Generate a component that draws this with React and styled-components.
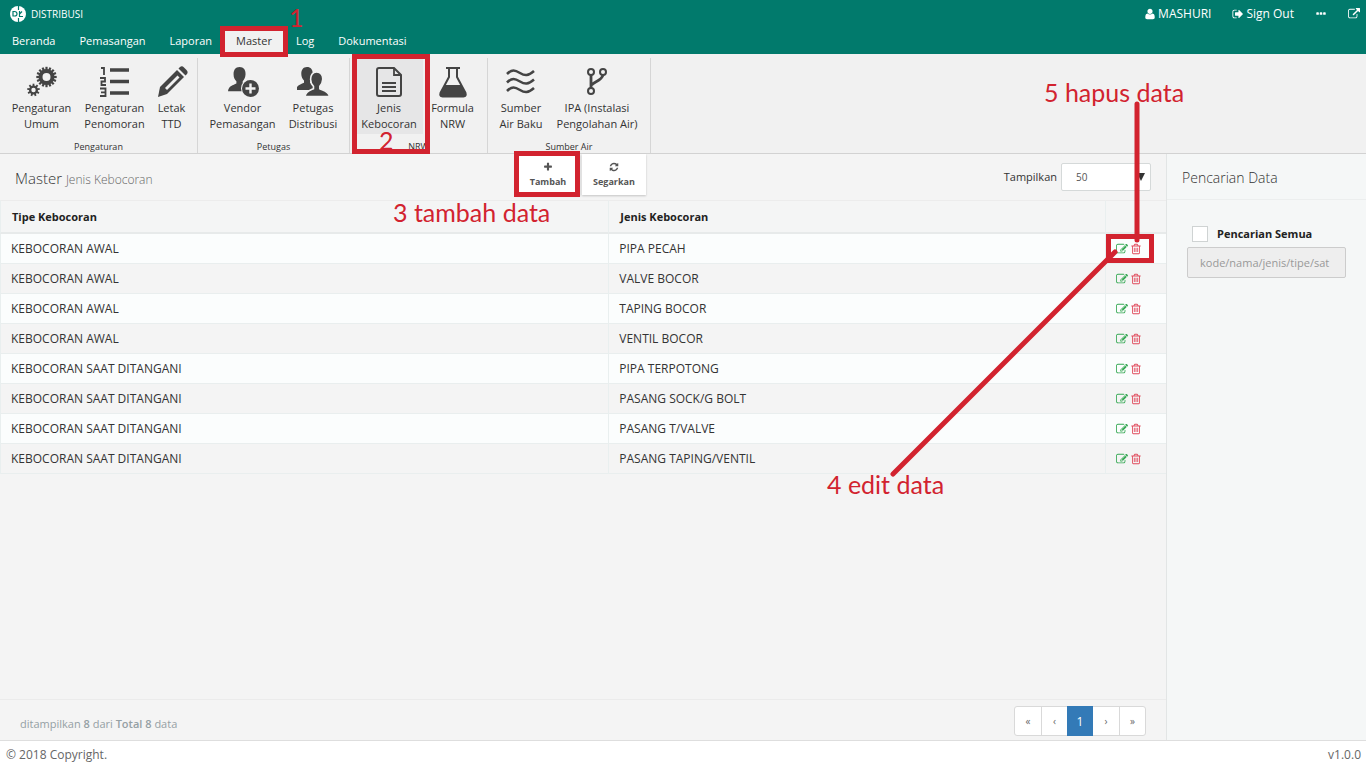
import React from "react";
import styled, { createGlobalStyle } from "styled-components";

const RED = "#d2232f";

const GlobalStyle = createGlobalStyle`
  *, *::before, *::after { box-sizing: border-box; }
  body {
    margin: 0;
    font-family: "Open Sans", "Noto Sans", sans-serif;
    font-size: 12px;
    line-height: 16px;
    color: #333;
    background: #f4f4f4;
  }
  button, input, select { font-family: inherit; margin: 0; }
`;

const Page = styled.div`
  min-height: 100vh;
  display: flex;
  flex-direction: column;
`;

/* ---------- header ---------- */
const Header = styled.header`
  background: #017a6c;
  color: #fff;
`;
const TitleBar = styled.div`
  height: 27px;
  display: flex;
  align-items: center;
  justify-content: space-between;
  padding: 0 6px 0 10px;
`;
const Brand = styled.div`
  display: flex;
  align-items: center;
  gap: 5px;
  font-size: 10px;
`;
const UserLinks = styled.nav`
  display: flex;
  align-items: center;
  gap: 21px;
`;
const UserLink = styled.a`
  display: flex;
  align-items: center;
  gap: 2px;
  color: #fff;
  text-decoration: none;
`;
const Tabs = styled.nav`
  display: flex;
  align-items: flex-end;
  height: 27px;
`;
const Tab = styled.a`
  position: relative;
  height: 24px;
  padding: 3px 12px;
  font-size: 11px;
  color: ${(p) => (p.$active ? "#333" : "#fff")};
  background: ${(p) => (p.$active ? "#f1f1f1" : "transparent")};
  text-decoration: none;
`;

/* ---------- ribbon ---------- */
const Ribbon = styled.div`
  display: flex;
  height: 100px;
  padding-top: 4px;
  background: #f1f1f1;
  border-bottom: 1px solid #d2d2d2;
`;
const Group = styled.section`
  display: flex;
  flex-direction: column;
  padding: 0 5px;
  border-right: 1px solid #d6d6d6;
`;
const GroupItems = styled.div`
  display: flex;
  flex: 1;
`;
const GroupName = styled.div`
  font-size: 9px;
  line-height: 12px;
  text-align: center;
`;
const RibbonButton = styled.button`
  position: relative;
  display: flex;
  flex-direction: column;
  align-items: center;
  width: ${(p) => p.$width}px;
  height: 76px;
  padding: 8px 0 0;
  border: 0;
  background: ${(p) => (p.$active ? "#e6e6e7" : "transparent")};
  font-size: 11px;
  line-height: 16px;
  color: #333;
  white-space: pre;
  svg { margin-bottom: 2px; flex: none; }
`;

/* ---------- body ---------- */
const Body = styled.div`
  flex: 1;
  display: flex;
`;
const Main = styled.main`
  flex: 1;
  min-width: 0;
  display: flex;
  flex-direction: column;
  background: #f4f4f4;
`;
const Toolbar = styled.div`
  height: 46px;
  display: grid;
  grid-template-columns: 1fr auto 1fr;
  align-items: start;
  padding: 0 15px;
`;
const Title = styled.h1`
  margin: 0;
  padding-top: 14px;
  font-size: 15px;
  line-height: 20px;
  font-weight: 300;
  small { font-size: 12px; color: #666; font-weight: 300; }
`;
const Actions = styled.div`
  display: flex;
  gap: 2px;
  padding-right: 4px;
`;
const ActionButton = styled.button`
  position: relative;
  width: 64px;
  height: 41px;
  display: flex;
  flex-direction: column;
  align-items: center;
  justify-content: center;
  gap: 4px;
  border: 0;
  padding: 0;
  background: #fff;
  box-shadow: 0 1px 2px rgba(0, 0, 0, 0.2);
  color: #555;
  font-size: 9px;
  line-height: 12px;
  font-weight: 700;
`;
const PageSize = styled.label`
  justify-self: end;
  display: flex;
  align-items: center;
  gap: 4px;
  padding-top: 9px;
  font-size: 11px;
`;
const SelectWrap = styled.span`
  position: relative;
  display: block;
  &::after {
    content: "";
    position: absolute;
    right: 6px;
    top: 10px;
    border: 4px solid transparent;
    border-top: 8px solid #333;
    border-bottom: 0;
  }
`;
const Select = styled.select`
  appearance: none;
  display: block;
  width: 90px;
  height: 28px;
  padding: 0 14px;
  border: 1px solid #d5d9d9;
  border-radius: 2px;
  background: #fff;
  font-size: 10px;
  color: #555;
`;

const Table = styled.table`
  width: 100%;
  border-collapse: separate;
  border-spacing: 0;
  table-layout: fixed;
  text-align: left;
`;
const HeadCell = styled.th`
  height: 34px;
  padding: 0 11px;
  font-size: 11px;
  font-weight: 700;
  color: #222;
  background: #f4f5f5;
  border-top: 1px solid #ececec;
  border-bottom: 2px solid #e7eaea;
  border-left: 1px solid #e9efef;
`;
const Row = styled.tr`
  background: ${(p) => (p.$odd ? "#f4f4f4" : "#fbfdfd")};
`;
const Cell = styled.td`
  position: relative;
  height: 30px;
  padding: 0 10px;
  border-bottom: 1px solid #e9eeee;
  border-left: 1px solid #e9efef;
`;
const RowActions = styled.div`
  display: flex;
  gap: 2px;
`;
const IconButton = styled.button`
  display: flex;
  border: 0;
  padding: 0;
  background: none;
  color: ${(p) => p.$color};
`;

const ListFooter = styled.div`
  margin-top: auto;
  height: 41px;
  display: flex;
  align-items: center;
  justify-content: space-between;
  padding: 2px 20px 0;
  border-top: 1px solid #ebebeb;
  font-size: 11px;
  color: #95a0a4;
  p { margin: 0; padding-top: 6px; }
  b { font-weight: 600; }
`;
const Pager = styled.nav`
  display: flex;
  height: 30px;
  border: 1px solid #d9d9d9;
  border-radius: 3px;
  background: #fff;
`;
const PageButton = styled.button`
  width: 26px;
  height: ${(p) => (p.$current ? 30 : 28)}px;
  margin: ${(p) => (p.$current ? "-1px 0" : "0")};
  padding: 0;
  border: 0;
  border-left: ${(p) => (p.$divided ? "1px solid #d9d9d9" : "0")};
  background: ${(p) => (p.$current ? "#337ab7" : "transparent")};
  color: ${(p) => (p.$current ? "#fff" : "#666")};
  font-size: ${(p) => (p.$current ? 12 : 10)}px;
`;

const Sidebar = styled.aside`
  width: 200px;
  border-left: 1px solid #e2e5e5;
  background: #f5f7f7;
`;
const SideTitle = styled.h2`
  margin: 0;
  height: 46px;
  padding: 14px 15px 0;
  border-bottom: 1px solid #eceeee;
  font-size: 14px;
  line-height: 20px;
  font-weight: 300;
`;
const SearchForm = styled.form`
  padding: 26px 20px;
`;
const CheckLabel = styled.label`
  display: flex;
  align-items: center;
  gap: 9px;
  padding-left: 5px;
  font-size: 11px;
  font-weight: 700;
  color: #222;
`;
const Checkbox = styled.input`
  appearance: none;
  width: 16px;
  height: 16px;
  border: 1px solid #cfd3d3;
  background: #fff;
`;
const SearchInput = styled.input`
  display: block;
  width: 100%;
  height: 31px;
  margin-top: 5px;
  padding: 0 12px;
  border: 1px solid #ccc;
  border-radius: 2px;
  background: #eee;
  font-size: 11px;
  &::placeholder { color: #999; opacity: 1; }
`;

const PageFooter = styled.footer`
  height: 28px;
  display: flex;
  align-items: center;
  justify-content: space-between;
  padding: 0 5px 0 6px;
  border-top: 1px solid #dedede;
  background: #fff;
  color: #666;
`;

/* ---------- tutorial call-outs lying over the page ---------- */
const Frame = styled.span`
  position: absolute;
  z-index: 5;
  left: ${(p) => p.$x}px;
  top: ${(p) => p.$y}px;
  width: ${(p) => p.$w}px;
  height: ${(p) => p.$h}px;
  border: 5px solid ${RED};
  pointer-events: none;
`;
const Note = styled.span`
  position: absolute;
  z-index: 6;
  left: ${(p) => p.$x}px;
  top: ${(p) => p.$y}px;
  font-family: Lato, sans-serif;
  font-size: 25px;
  line-height: 28px;
  font-weight: 400;
  color: ${RED};
  white-space: nowrap;
  pointer-events: none;
`;
const Pointer = styled.svg`
  position: absolute;
  z-index: 5;
  left: 0;
  top: 0;
  overflow: visible;
  pointer-events: none;
`;

/* ---------- icons ---------- */
const GLYPHS = {
  user: "M1600 1405q0 120-73 189.5t-194 69.5h-874q-121 0-194-69.5t-73-189.5q0-53 3.5-103.5t14-109 26.5-108.5 43-97.5 62-81 85.5-53.5 111.5-20q9 0 42 21.5t74.5 48 108 48 133.5 21.5 133.5-21.5 108-48 74.5-48 42-21.5q61 0 111.5 20t85.5 53.5 62 81 43 97.5 26.5 108.5 14 109 3.5 103.5zm-320-893q0 159-112.5 271.5t-271.5 112.5-271.5-112.5-112.5-271.5 112.5-271.5 271.5-112.5 271.5 112.5 112.5 271.5z",
  signOut: "M704 1440q0 4 1 20t.5 26.5-3 23.5-10 19.5-20.5 6.5h-320q-119 0-203.5-84.5t-84.5-203.5v-704q0-119 84.5-203.5t203.5-84.5h320q13 0 22.5 9.5t9.5 22.5q0 4 1 20t.5 26.5-3 23.5-10 19.5-20.5 6.5h-320q-66 0-113 47t-47 113v704q0 66 47 113t113 47h312l11.5 1 11.5 3 8 5.5 7 9 2 13.5zm928-544q0 26-19 45l-544 544q-19 19-45 19t-45-19-19-45v-288h-448q-26 0-45-19t-19-45v-384q0-26 19-45t45-19h448v-288q0-26 19-45t45-19 45 19l544 544q19 19 19 45z",
  dots: "M576 736v192q0 40-28 68t-68 28h-192q-40 0-68-28t-28-68v-192q0-40 28-68t68-28h192q40 0 68 28t28 68zm512 0v192q0 40-28 68t-68 28h-192q-40 0-68-28t-28-68v-192q0-40 28-68t68-28h192q40 0 68 28t28 68zm512 0v192q0 40-28 68t-68 28h-192q-40 0-68-28t-28-68v-192q0-40 28-68t68-28h192q40 0 68 28t28 68z",
  external: "M1408 928v320q0 119-84.5 203.5t-203.5 84.5h-832q-119 0-203.5-84.5t-84.5-203.5v-832q0-119 84.5-203.5t203.5-84.5h704q14 0 23 9t9 23v64q0 14-9 23t-23 9h-704q-66 0-113 47t-47 113v832q0 66 47 113t113 47h832q66 0 113-47t47-113v-320q0-14 9-23t23-9h64q14 0 23 9t9 23zm384-864v512q0 26-19 45t-45 19-45-19l-176-176-652 652q-10 10-23 10t-23-10l-114-114q-10-10-10-23t10-23l652-652-176-176q-19-19-19-45t19-45 45-19h512q26 0 45 19t19 45z",
  plus: "M1600 736v192q0 40-28 68t-68 28h-416v416q0 40-28 68t-68 28h-192q-40 0-68-28t-28-68v-416h-416q-40 0-68-28t-28-68v-192q0-40 28-68t68-28h416v-416q0-40 28-68t68-28h192q40 0 68 28t28 68v416h416q40 0 68 28t28 68z",
  refresh: "M1639 1056q0 5-1 7-64 268-268 434.5t-478 166.5q-146 0-282.500-55t-243.500-157l-129 129q-19 19-45 19t-45-19-19-45v-448q0-26 19-45t45-19h448q26 0 45 19t19 45-19 45l-137 137q71 66 161 102t187 36q134 0 250-65t186-179q11-17 53-117 8-23 30-23h192q13 0 22.500 9.500t9.500 22.500zm25-800v448q0 26-19 45t-45 19h-448q-26 0-45-19t-19-45 19-45l138-138q-148-137-349-137-134 0-250 65t-186 179q-11 17-53 117-8 23-30 23h-199q-13 0-22.500-9.500t-9.500-22.500v-7q65-268 270-434.500t480-166.500q146 0 284 55.500t245 156.500l130-129q19-19 45-19t45 19 19 45z",
  edit: "M888 1184l116-116-152-152-116 116v56h96v96h56zm440-720q-16-16-33 1l-350 350q-17 17-1 33t33-1l350-350q17-17 1-33zm80 594v190q0 119-84.5 203.5t-203.5 84.5h-832q-119 0-203.5-84.5t-84.5-203.5v-832q0-119 84.5-203.5t203.5-84.5h832q63 0 117 25 15 7 18 23 3 17-9 29l-49 49q-14 14-32 8-23-6-45-6h-832q-66 0-113 47t-47 113v832q0 66 47 113t113 47h832q66 0 113-47t47-113v-126q0-13 9-22l64-64q15-15 35-7t20 29zm-96-738l288 288-672 672h-288v-288zm444 132l-92 92-288-288 92-92q28-28 68-28t68 28l152 152q28 28 28 68t-28 68z",
  trash: "M704 736v576q0 14-9 23t-23 9h-64q-14 0-23-9t-9-23v-576q0-14 9-23t23-9h64q14 0 23 9t9 23zm256 0v576q0 14-9 23t-23 9h-64q-14 0-23-9t-9-23v-576q0-14 9-23t23-9h64q14 0 23 9t9 23zm256 0v576q0 14-9 23t-23 9h-64q-14 0-23-9t-9-23v-576q0-14 9-23t23-9h64q14 0 23 9t9 23zm128 724v-948h-896v948q0 22 7 40.5t14.5 27 10.5 8.5h832q3 0 10.5-8.5t14.5-27 7-40.5zm-672-1076h448l-48-117q-7-9-17-11h-317q-10 2-17 11zm928 32v64q0 14-9 23t-23 9h-96v948q0 83-47 143.5t-113 60.5h-832q-66 0-113-58.5t-47-141.5v-952h-96q-14 0-23-9t-9-23v-64q0-14 9-23t23-9h309l70-167q15-37 54-63t79-26h320q40 0 79 26t54 63l70 167h309q14 0 23 9t9 23z",
};
const Glyph = ({ name, size = 12 }) => (
  <svg width={size} height={size} viewBox="0 0 1792 1792" fill="currentColor" aria-hidden="true">
    <path d={GLYPHS[name]} />
  </svg>
);

const Logo = () => (
  <svg width="16" height="16" viewBox="0 0 16 16" aria-hidden="true">
    <circle cx="8" cy="8" r="8" fill="#fff" />
    <path d="M3 5.500h1.500q2.500 0 2.500 2.300T4.500 10H3zM9.500 5v5.500H13M8.500 0v4M8.500 12V16M9.500 8L12 5.500" fill="none" stroke="#017a6c" strokeWidth="1.200" />
  </svg>
);

const Gear = ({ cx, cy, r, teeth, tooth, bore }) => (
  <g transform={`translate(${cx} ${cy})`}>
    <circle r={(r + bore) / 2} fill="none" stroke="#444" strokeWidth={r - bore} />
    {Array.from({ length: teeth }, (_, i) => (
      <rect key={i} x={-tooth / 2} y={-r - tooth} width={tooth} height={tooth + 1} fill="#444" transform={`rotate(${(360 / teeth) * i})`} />
    ))}
  </g>
);

const PERSON = "M11 1c4 0 6 3 5.700 7-.2 3-1.400 5-2.700 6.500v2.200c3 1.500 8.500 2.300 9 7.300H0c.5-5 5-5.800 8-7.300v-2.200C6.500 13 5.300 11 5.300 8 5.200 4 7 1 11 1z";

const RIBBON_ICONS = {
  gears: (
    <>
      <Gear cx={20.5} cy={11} r={8} teeth={16} tooth={2.2} bore={4} />
      <Gear cx={7.5} cy={24} r={4.5} teeth={9} tooth={1.8} bore={2.2} />
    </>
  ),
  list: (
    <g fill="none" stroke="#444" strokeWidth="3">
      <path d="M11 4h19M11 15.500h19M11 27h19" strokeWidth="3.500" />
      <path d="M2 2h3v7M1 12h5v3.500H2.500V19H7M1 22.500h5.500V30H1M2 26.300h4" strokeWidth="1.800" />
    </g>
  ),
  pencil: (
    <>
      <path d="M4 21L21 4l7 7-17 17-9 3z" fill="#444" />
      <path d="M22.500 2.500L24 1q2-1.500 4 .5l2.500 2.500q2 2 .5 4l-1.500 1.500z" fill="#444" />
      <path d="M9 22L21.500 9.500l2 2L11 24z" fill="#f1f1f1" />
    </>
  ),
  vendor: (
    <>
      <path d={PERSON} transform="translate(1 0) scale(1.050)" fill="#444" />
      <circle cx="23.500" cy="22.500" r="9.500" fill="#f1f1f1" />
      <circle cx="23.500" cy="22.500" r="8.500" fill="#444" />
      <path d="M23.500 17.500v10M18.500 22.500h10" stroke="#f1f1f1" strokeWidth="2.400" />
    </>
  ),
  people: (
    <>
      <path d={PERSON} fill="#444" transform="translate(-1 0)" />
      <path d={PERSON} fill="#444" stroke="#f1f1f1" strokeWidth="1.500" transform="translate(8 5) scale(1.060)" />
    </>
  ),
  file: (
    <g fill="none" stroke="#444" strokeWidth="2">
      <path d="M6 2h15l7 7v19q0 2-2 2H6q-2 0-2-2V4q0-2 2-2z" />
      <path d="M21 2v7h7" strokeWidth="1.800" />
      <path d="M9 17h14M9 21h14M9 25h14" strokeWidth="1.800" />
    </g>
  ),
  flask: (
    <>
      <path d="M9 2h14M12 2v9L3.500 27q-1 3.500 2 3.500h21q3 0 2-3.500L20 11V2" fill="none" stroke="#444" strokeWidth="2" />
      <path d="M8 19h16l5 9q0 3-2 3H5q-2 0-2-3z" fill="#444" />
    </>
  ),
  waves: (
    <path
      d="M2 8c5-5 8-4 13-1s8 3 14-2M2 16.500c5-5 8-4 13-1s8 3 14-2M2 25c5-5 8-4 13-1s8 3 14-2"
      fill="none" stroke="#444" strokeWidth="2.600"
    />
  ),
  branch: (
    <g fill="none" stroke="#444">
      <circle cx="10" cy="6" r="3" strokeWidth="2" />
      <circle cx="22" cy="6" r="3" strokeWidth="2" />
      <circle cx="10" cy="25" r="3" strokeWidth="2" />
      <path d="M10 9v13M10.500 19.500c1-4 10-4 11.500-10.500" strokeWidth="2.800" />
    </g>
  ),
};
const RibbonIcon = ({ name }) => (
  <svg width="32" height="32" viewBox="0 0 32 32" aria-hidden="true">{RIBBON_ICONS[name]}</svg>
);

/* ---------- data ---------- */
const TABS = ["Beranda", "Pemasangan", "Laporan", "Master", "Log", "Dokumentasi"];
const GROUPS = [
  { name: "Pengaturan", items: [
    ["gears", "Pengaturan\nUmum", 73], ["list", "Pengaturan\nPenomoran", 73], ["pencil", "Letak\nTTD", 41]] },
  { name: "Petugas", items: [["vendor", "Vendor\nPemasangan", 79], ["people", "Petugas\nDistribusi", 62]] },
  { name: "NRW", items: [["file", "Jenis\nKebocoran", 68], ["flask", "Formula\nNRW", 59]] },
  { name: "Sumber Air", items: [["waves", "Sumber\nAir Baku", 56], ["branch", "IPA (Instalasi\nPengolahan Air)", 96]] },
];
const ROWS = [
  ["KEBOCORAN AWAL", "PIPA PECAH"],
  ["KEBOCORAN AWAL", "VALVE BOCOR"],
  ["KEBOCORAN AWAL", "TAPING BOCOR"],
  ["KEBOCORAN AWAL", "VENTIL BOCOR"],
  ["KEBOCORAN SAAT DITANGANI", "PIPA TERPOTONG"],
  ["KEBOCORAN SAAT DITANGANI", "PASANG SOCK/G BOLT"],
  ["KEBOCORAN SAAT DITANGANI", "PASANG T/VALVE"],
  ["KEBOCORAN SAAT DITANGANI", "PASANG TAPING/VENTIL"],
];

export default function App() {
  return (
    <Page>
      <GlobalStyle />
      <Header>
        <TitleBar>
          <Brand><Logo />DISTRIBUSI</Brand>
          <UserLinks>
            <UserLink href="#user"><Glyph name="user" />MASHURI</UserLink>
            <UserLink href="#signout"><Glyph name="signOut" />Sign Out</UserLink>
            <UserLink href="#more" aria-label="Menu"><Glyph name="dots" /></UserLink>
            <UserLink href="#open" aria-label="Buka"><Glyph name="external" /></UserLink>
          </UserLinks>
        </TitleBar>
        <Tabs>
          {TABS.map((t) => (
            <Tab key={t} href={`#${t}`} $active={t === "Master"}>
              {t}
              {t === "Master" && (
                <>
                  <Frame $x={-4} $y={-4} $w={68} $h={31} />
                  <Note $x={65} $y={-27}>1</Note>
                </>
              )}
            </Tab>
          ))}
        </Tabs>
      </Header>

      <Ribbon>
        {GROUPS.map((g) => (
          <Group key={g.name}>
            <GroupItems>
              {g.items.map(([icon, label, width]) => (
                <RibbonButton key={label} type="button" $width={width} $active={icon === "file"}>
                  <RibbonIcon name={icon} />
                  {label}
                  {icon === "file" && (
                    <>
                      <Frame $x={-3} $y={-4} $w={78} $h={100} />
                      <Note $x={24} $y={68}>2</Note>
                    </>
                  )}
                </RibbonButton>
              ))}
            </GroupItems>
            <GroupName>{g.name}</GroupName>
          </Group>
        ))}
      </Ribbon>

      <Body>
        <Main>
          <Toolbar>
            <Title>Master <small>Jenis Kebocoran</small></Title>
            <Actions>
              <ActionButton type="button">
                <Glyph name="plus" size={10} />
                Tambah
                <Frame $x={-2} $y={-3} $w={66} $h={46} />
                <Note $x={-123} $y={44}>3 tambah data</Note>
              </ActionButton>
              <ActionButton type="button"><Glyph name="refresh" size={10} />Segarkan</ActionButton>
            </Actions>
            <PageSize>
              Tampilkan
              <SelectWrap>
                <Select defaultValue="50"><option>50</option><option>100</option></Select>
              </SelectWrap>
            </PageSize>
          </Toolbar>

          <Table>
            <colgroup>
              <col />
              <col style={{ width: "42.6%" }} />
              <col style={{ width: "61px" }} />
            </colgroup>
            <thead>
              <tr>
                <HeadCell scope="col">Tipe Kebocoran</HeadCell>
                <HeadCell scope="col">Jenis Kebocoran</HeadCell>
                <HeadCell aria-label="Aksi" />
              </tr>
            </thead>
            <tbody>
              {ROWS.map(([tipe, jenis], i) => (
                <Row key={jenis} $odd={i % 2 === 1}>
                  <Cell>{tipe}</Cell>
                  <Cell>{jenis}</Cell>
                  <Cell>
                    <RowActions>
                      <IconButton type="button" aria-label="Edit" $color="#35a853"><Glyph name="edit" /></IconButton>
                      <IconButton type="button" aria-label="Hapus" $color="#e0485a"><Glyph name="trash" /></IconButton>
                    </RowActions>
                    {i === 0 && (
                      <>
                        <Frame $x={0} $y={0} $w={48} $h={29} />
                        <Pointer width="1" height="1" stroke={RED} strokeWidth="5" strokeLinecap="round" fill="none" aria-hidden="true">
                          <path d="M31-130V6M9 18L-213 240" />
                        </Pointer>
                        <Note $x={-62} $y={-156}>5 hapus data</Note>
                        <Note $x={-279} $y={236}>4 edit data</Note>
                      </>
                    )}
                  </Cell>
                </Row>
              ))}
            </tbody>
          </Table>

          <ListFooter>
            <p>ditampilkan <b>8</b> dari <b>Total 8</b> data</p>
            <Pager aria-label="Halaman">
              <PageButton type="button">«</PageButton>
              <PageButton type="button" $divided>‹</PageButton>
              <PageButton type="button" $current>1</PageButton>
              <PageButton type="button">›</PageButton>
              <PageButton type="button" $divided>»</PageButton>
            </Pager>
          </ListFooter>
        </Main>

        <Sidebar>
          <SideTitle>Pencarian Data</SideTitle>
          <SearchForm>
            <CheckLabel><Checkbox type="checkbox" />Pencarian Semua</CheckLabel>
            <SearchInput type="text" aria-label="Pencarian" placeholder="kode/nama/jenis/tipe/sat" disabled />
          </SearchForm>
        </Sidebar>
      </Body>

      <PageFooter>
        <span>© 2018 Copyright.</span>
        <span>v1.0.0</span>
      </PageFooter>
    </Page>
  );
}
